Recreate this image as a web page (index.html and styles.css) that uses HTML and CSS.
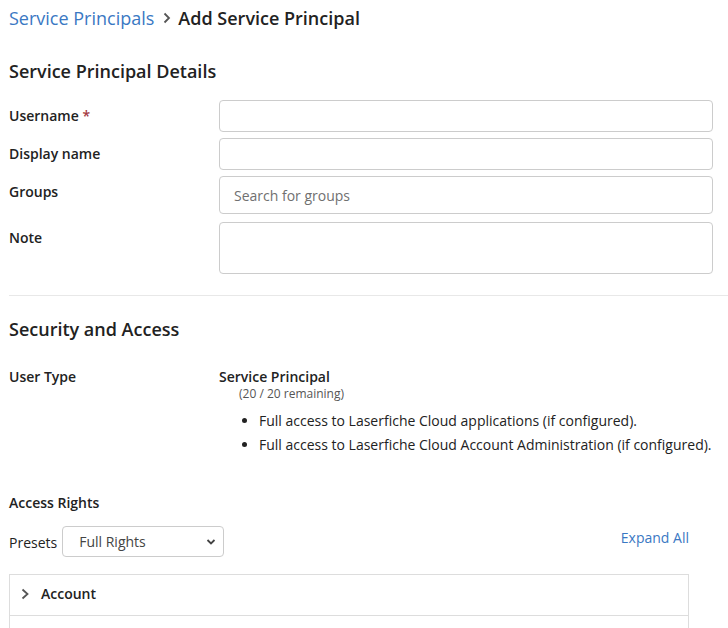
FILE: index.html
```html
<!DOCTYPE html>
<html>
<head>
<meta charset="utf-8">
<link rel="stylesheet" href="styles.css">
</head>
<body>
<div class="page">
  <nav class="crumbs">
    <a class="crumb-link">Service Principals</a>
    <svg class="crumb-sep" width="10" height="14" viewBox="0 0 10 14"><path d="M2.5 2.5 L7 7 L2.5 11.5" fill="none" stroke="#555" stroke-width="1.8"/></svg>
    <span class="crumb-current">Add Service Principal</span>
  </nav>

  <h2 class="section-title first">Service Principal Details</h2>

  <div class="form">
    <div class="row r1">
      <label class="label">Username <span class="req">*</span></label>
      <input class="field h32" type="text">
    </div>
    <div class="row r2">
      <label class="label">Display name</label>
      <input class="field h32" type="text">
    </div>
    <div class="row r3">
      <label class="label">Groups</label>
      <input class="field h38" type="text" placeholder="Search for groups">
    </div>
    <div class="row r4">
      <label class="label">Note</label>
      <textarea class="field h52"></textarea>
    </div>
  </div>

  <hr class="divider">

  <h2 class="section-title second">Security and Access</h2>

  <div class="type-row">
    <div class="label">User Type</div>
    <div class="type-info">
      <div class="type-name">Service Principal</div>
      <div class="type-count">(20 / 20 remaining)</div>
      <ul class="type-list">
        <li>Full access to Laserfiche Cloud applications (if configured).</li>
        <li>Full access to Laserfiche Cloud Account Administration (if configured).</li>
      </ul>
    </div>
  </div>

  <div class="rights-title">Access Rights</div>

  <div class="rights-bar">
    <div class="presets">
      <span class="presets-label">Presets</span>
      <div class="select-wrap">
        <select class="select"><option>Full Rights</option></select>
        <svg class="select-arrow" width="10" height="8" viewBox="0 0 10 8"><path d="M1.5 2 L5 5.5 L8.5 2" fill="none" stroke="#444" stroke-width="1.8"/></svg>
      </div>
    </div>
    <a class="expand">Expand All</a>
  </div>

  <div class="accordion">
    <div class="acc-row">
      <svg class="acc-chev" width="10" height="14" viewBox="0 0 10 14"><path d="M2.5 2.5 L7.5 7 L2.5 11.5" fill="none" stroke="#555" stroke-width="1.8"/></svg>
      <span class="acc-title">Account</span>
    </div>
    <div class="acc-row"></div>
  </div>
</div>
</body>
</html>
```
FILE: styles.css
```css
* { box-sizing: border-box; }
html, body { margin: 0; padding: 0; background: #fff; }
body {
  font-family: "Open Sans", "Noto Sans", sans-serif;
  font-size: 14px;
  color: #222;
}
.page { padding: 0 0 0 9px; }

.crumbs {
  display: flex;
  align-items: center;
  height: 36px;
  font-size: 18px;
  line-height: 24px;
}
.crumb-link { color: #3a78c3; }
.crumb-sep { margin: 0 6px 0 8px; }
.crumb-current { font-weight: 600; color: #222; }

.section-title {
  margin: 0;
  font-size: 18px;
  line-height: 24px;
  font-weight: 600;
  color: #222;
}
.section-title.first { margin-top: 23px; margin-bottom: 17px; }
.section-title.second { margin-top: 21px; margin-bottom: 26px; }

.form { padding-right: 15px; }
.row { display: flex; align-items: flex-start; }
.r1, .r2 { margin-bottom: 6px; }
.r3 { margin-bottom: 8px; }
.label {
  width: 210px;
  flex: none;
  padding-top: 6px;
  font-weight: 600;
  line-height: 20px;
  color: #222;
}
.req { color: #a4393f; }
.field {
  flex: 1;
  display: block;
  margin: 0;
  border: 1px solid #ccc;
  border-radius: 4px;
  font-family: "Open Sans", "Noto Sans", sans-serif;
  font-size: 14px;
  padding: 0 14px;
  color: #222;
  background: #fff;
  resize: none;
}
.field::placeholder { color: #707070; }
.h32 { height: 32px; }
.h38 { height: 38px; }
.h52 { height: 52px; }

.divider {
  margin: 21px 0 0 0;
  border: 0;
  border-top: 1px solid #e8e8e8;
  height: 0;
}

.type-row { display: flex; align-items: flex-start; }
.type-row .label { padding-top: 0; }
.type-name { font-weight: 600; line-height: 20px; }
.type-count {
  font-size: 12px;
  line-height: 14px;
  color: #555;
  padding-left: 20px;
}
.type-list {
  margin: 8px 0 0 0;
  padding-left: 40px;
  line-height: 24px;
}

.rights-title {
  margin-top: 36px;
  font-weight: 600;
  line-height: 20px;
}

.rights-bar {
  display: flex;
  align-items: center;
  justify-content: space-between;
  width: 680px;
  margin-top: 13px;
}
.presets { display: flex; align-items: center; }
.presets-label { margin-right: 5px; line-height: 20px; padding-top: 2px; }
.select-wrap { position: relative; }
.select {
  -webkit-appearance: none;
  appearance: none;
  width: 162px;
  height: 31px;
  border: 1px solid #ccc;
  border-radius: 4px;
  background: #fff;
  font-family: "Open Sans", "Noto Sans", sans-serif;
  font-size: 14px;
  color: #444;
  padding: 0 16px;
  margin: 0;
}
.select-arrow { position: absolute; right: 8px; top: 12px; pointer-events: none; }
.expand { color: #3a78c3; line-height: 20px; margin-top: -7px; }

.accordion {
  width: 680px;
  margin-top: 17px;
  border: 1px solid #ddd;
  border-bottom: 0;
}
.acc-row {
  display: flex;
  align-items: center;
  height: 41px;
  border-bottom: 1px solid #ddd;
  padding-left: 10px;
  padding-bottom: 3px;
}
.acc-chev { margin-right: 11px; }
.acc-title { font-weight: 600; }
```
